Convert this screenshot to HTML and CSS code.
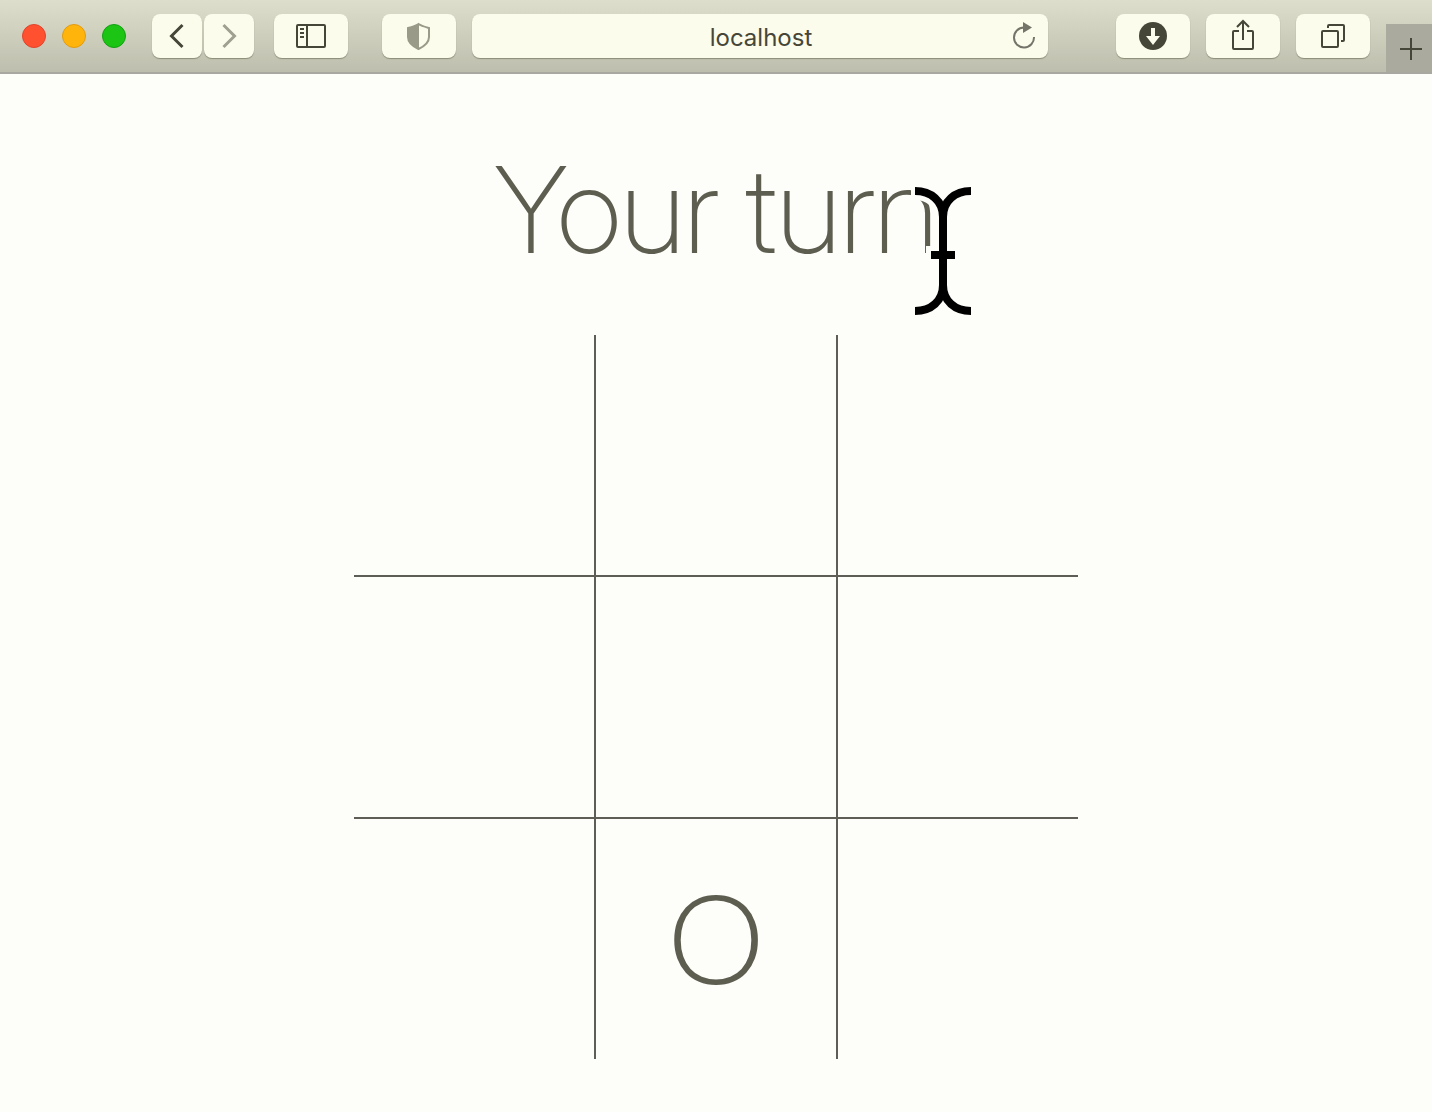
FILE: index.html
```html
<!DOCTYPE html>
<html lang="en">
<head>
<meta charset="utf-8">
<meta name="viewport" content="width=device-width, initial-scale=1">
<title>Tic-tac-toe</title>
<link rel="stylesheet" href="styles.css">
</head>
<body>
<header class="toolbar">
  <div class="lights">
    <button class="light light-close" aria-label="Close"></button>
    <button class="light light-minimise" aria-label="Minimise"></button>
    <button class="light light-zoom" aria-label="Zoom"></button>
  </div>
  <nav class="history">
    <button class="tool tool-narrow" aria-label="Back">
      <svg width="50" height="44" viewBox="0 0 50 44"><path d="M30.500 11 19.500 22l11 11" stroke-width="3"/></svg>
    </button>
    <button class="tool tool-narrow tool-faded" aria-label="Forward">
      <svg width="50" height="44" viewBox="0 0 50 44"><path d="M19.500 11l11 11-11 11" stroke-width="3"/></svg>
    </button>
  </nav>
  <button class="tool sidebar-tool" aria-label="Sidebar">
    <svg width="74" height="44" viewBox="0 0 74 44"><rect x="23" y="11" width="28" height="22" rx="1" stroke-width="2"/><path d="M33 11v22" stroke-width="2"/><path d="M26 15h4M26 19h4M26 23h4" stroke-width="2"/></svg>
  </button>
  <button class="tool privacy-tool" aria-label="Privacy report">
    <svg width="74" height="44" viewBox="0 0 74 44"><path d="M36.500 10c3 2 7 3 10.500 4v9c0 5-4 9-10.500 12-6.500-3-10.500-7-10.500-12v-9c4-1 7.500-2 10.500-4z" stroke-width="2"/><path class="solid" d="M37 10v25c-7-3-11-7-11-12v-9c4-1 7-2 11-4z"/></svg>
  </button>
  <form class="address">
    <input class="address-input" type="text" value="localhost" aria-label="Address">
    <button class="reload" type="button" aria-label="Reload">
      <svg width="26" height="32" viewBox="0 0 26 32"><path d="M12 7.500a10 10 0 1 0 10 9.500" stroke-width="2"/><path class="solid" d="M11 2l9 5.500-9 5.500z"/></svg>
    </button>
  </form>
  <div class="actions">
    <button class="tool" aria-label="Downloads">
      <svg width="74" height="44" viewBox="0 0 74 44"><circle class="solid" cx="37" cy="22" r="14"/><path class="knockout" d="M35 14h4v8h5l-7 9-7-9h5z"/></svg>
    </button>
    <button class="tool" aria-label="Share">
      <svg width="74" height="44" viewBox="0 0 74 44"><path d="M33 17h-5q-1 0-1 1v16q0 1 1 1h18q1 0 1-1V18q0-1-1-1h-5M37 26V8M31 13l6-6 6 6" stroke-width="2"/></svg>
    </button>
    <button class="tool" aria-label="Tab overview">
      <svg width="74" height="44" viewBox="0 0 74 44"><rect x="26" y="17" width="16" height="16" rx="1" stroke-width="2"/><path d="M32 14v-2q0-1 1-1h14q1 0 1 1v14q0 1-1 1h-2" stroke-width="2"/></svg>
    </button>
  </div>
  <button class="new-tab" aria-label="New tab">
    <svg width="46" height="48" viewBox="0 0 46 48"><path d="M14 25h22M25 14v22" stroke-width="2"/></svg>
  </button>
</header>
<main class="game">
  <div class="status">
    <h1 class="status-text">Your turn</h1>
    <svg class="cursor" width="64" height="136" viewBox="0 0 64 136" aria-hidden="true">
      <path class="cursor-halo" d="M0 8H4C20 8 32 18 32 34V102C32 118 20 128 4 128M60 8C44 8 32 18 32 34M32 102C32 118 44 128 60 128M15 72h34"/>
      <path class="cursor-ink" d="M4 8C20 8 32 18 32 34V102C32 118 20 128 4 128M60 8C44 8 32 18 32 34M32 102C32 118 44 128 60 128M20 72h24"/>
    </svg>
  </div>
  <div class="board">
    <button class="cell" aria-label="Row 1, column 1"></button>
    <button class="cell" aria-label="Row 1, column 2"></button>
    <button class="cell" aria-label="Row 1, column 3"></button>
    <button class="cell" aria-label="Row 2, column 1"></button>
    <button class="cell" aria-label="Row 2, column 2"></button>
    <button class="cell" aria-label="Row 2, column 3"></button>
    <button class="cell" aria-label="Row 3, column 1"></button>
    <button class="cell">O</button>
    <button class="cell" aria-label="Row 3, column 3"></button>
  </div>
</main>
</body>
</html>
```
FILE: styles.css
```css
* {
  box-sizing: border-box;
}

body {
  margin: 0;
  background: #fdfdfa;
  color: #5e5e50;
  font-family: Inter, "Liberation Sans", sans-serif;
}

button,
input {
  margin: 0;
  padding: 0;
  border: 0;
  background: none;
  color: inherit;
  font: inherit;
}

svg {
  display: block;
  flex: none;
  fill: none;
  stroke: currentColor;
}

.solid {
  fill: currentColor;
  stroke: none;
}

.knockout {
  fill: #fcfcec;
  stroke: none;
}

.toolbar {
  display: flex;
  align-items: center;
  height: 74px;
  padding-left: 22px;
  border-bottom: 2px solid #a8a8a0;
  background: linear-gradient(#dedecc, #bebeae);
  color: #464638;
}

.lights {
  display: flex;
  gap: 16px;
  margin-right: 26px;
}

.light {
  width: 24px;
  height: 24px;
  border: 1px solid #e0442c;
  border-radius: 50%;
  background: #ff5130;
}

.light-minimise {
  border-color: #e09c10;
  background: #ffb40c;
}

.light-zoom {
  border-color: #14a014;
  background: #1cc414;
}

.history {
  display: flex;
  gap: 2px;
}

.tool {
  display: flex;
  align-items: center;
  justify-content: center;
  flex: none;
  width: 74px;
  height: 44px;
  border-radius: 8px;
  background: #fcfcec;
  box-shadow: 0 1px 1px #8c8c78;
}

.tool-narrow {
  width: 50px;
}

.tool-faded {
  color: #a0a090;
}

.sidebar-tool {
  margin-left: 20px;
}

.privacy-tool {
  margin: 0 16px 0 34px;
  color: #9a9a88;
}

.address {
  display: flex;
  align-items: center;
  flex: 1;
  height: 44px;
  padding: 0 10px 0 12px;
  border-radius: 8px;
  background: #fcfcec;
  box-shadow: 0 1px 1px #8c8c78;
}

.address-input {
  flex: 1;
  min-width: 0;
  padding: 4px 0 0 26px;
  font-size: 24px;
  line-height: 32px;
  text-align: center;
}

.reload {
  color: #74746a;
}

.actions {
  display: flex;
  gap: 16px;
  margin: 0 16px 0 68px;
}

.new-tab {
  align-self: flex-end;
  background: #aaaa9e;
}

.game {
  display: flex;
  flex-direction: column;
  align-items: center;
  padding: 64px 32px 52px;
}

.status {
  position: relative;
}

.status-text {
  margin: 0;
  font-family: "Inter Display", Inter, "Liberation Sans", sans-serif;
  font-size: 120px;
  font-variation-settings: "opsz" 32;
  font-weight: 220;
  line-height: 144px;
}

.cursor {
  position: absolute;
  top: 45px;
  right: -37px;
}

.cursor-halo {
  stroke: #fdfdfa;
  stroke-width: 18px;
}

.cursor-ink {
  stroke: #000;
  stroke-width: 8px;
}

.board {
  display: grid;
  grid-template-columns: repeat(3, 1fr);
  gap: 2px;
  width: 100%;
  max-width: 724px;
  margin-top: 53px;
  background: #5e5e56;
}

.cell {
  aspect-ratio: 1;
  padding-bottom: 6px;
  background: #fdfdfa;
  font-family: Lato, "Liberation Sans", sans-serif;
  font-size: 124px;
  font-weight: 300;
  line-height: 144px;
}
```
